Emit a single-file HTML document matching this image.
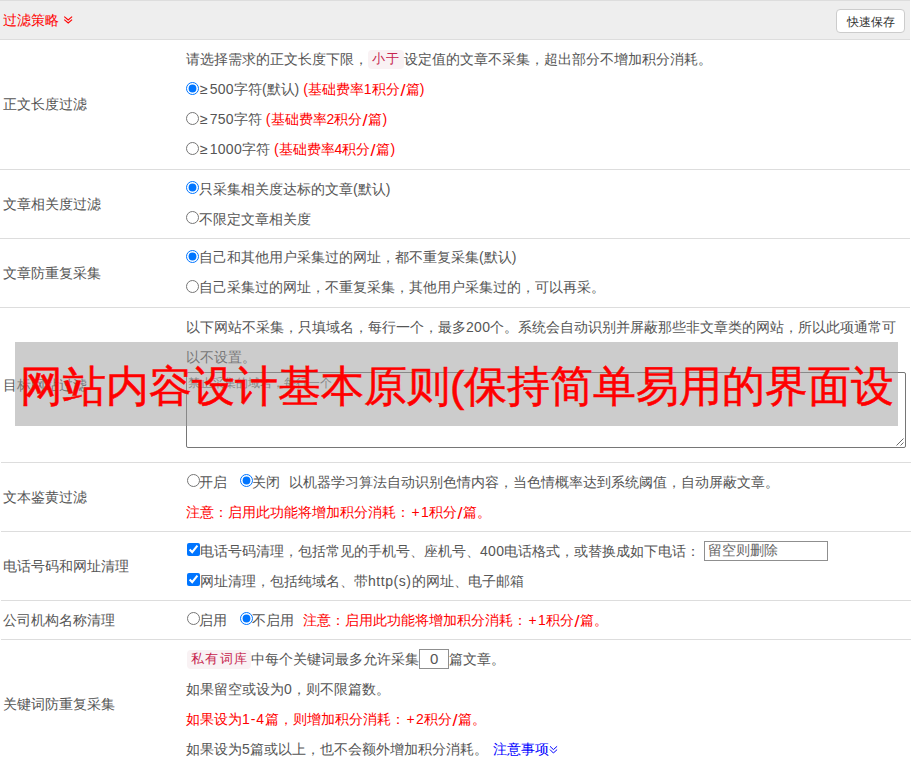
<!DOCTYPE html>
<html><head><meta charset="utf-8">
<style>
*{box-sizing:border-box}
html,body{margin:0;padding:0;background:#fff}
body{width:912px;height:768px;overflow:hidden;position:relative;font-family:"Liberation Sans",sans-serif;font-size:14px;color:#555}
.hd{position:absolute;left:0;top:0;width:910px;height:40px;background:#eee;border-top:1px solid #ddd;border-bottom:1px solid #ddd}
.hd .t{position:absolute;left:3px;top:0;line-height:38px;color:#f00;font-size:14px}
.btn{position:absolute;left:836px;top:8px;width:69px;height:24px;border:1px solid #ccc;border-radius:4px;background:#fff;color:#333;font-size:12px;line-height:25px;text-align:center}
.hr{position:absolute;left:0;width:910px;height:1px;background:#ddd}
.lb{position:absolute;left:3px;line-height:30px;height:30px;white-space:nowrap}
.ln{position:absolute;left:186px;line-height:30px;height:30px;white-space:nowrap}
.r{color:#f00}
.code{display:inline-block;background:#f9f2f4;color:#c7254e;border-radius:4px;padding:0 2.6px 0 4px;font-size:12.6px;letter-spacing:1.4px;height:19px;line-height:19px;vertical-align:top;margin-top:6px}
.rd{position:relative;display:inline-block;width:13px;height:13px;vertical-align:-1px}
.rd input{margin:0;position:absolute;left:0;top:0;width:13px;height:13px}
.ta{position:absolute;left:186px;top:372px;width:720px;height:76px;border:1px solid #767676;border-radius:2px;background:#fff}
.banner{position:absolute;left:15px;top:342px;width:883px;height:84px;background:rgba(153,153,153,.5);color:#f00;font-size:43.15px;line-height:88px;white-space:nowrap;overflow:hidden;padding-left:5px;font-weight:500;-webkit-text-stroke:.5px #f00}
.ge{margin:0 2px 0 1px}.n{letter-spacing:.3px}.sl{display:inline-block;margin:0 1.1px;transform:translateY(.8px) scale(1.3,1.17)}.pl{margin:0 1.3px 0 1.4px}.sp{display:inline-block;height:1px}.u input{top:-1px}.ru input{left:1px;top:-1px}
.inp{display:inline-block;vertical-align:top;border:1px solid #8f8f8f;background:#fff}
</style></head><body>
<div class="hd"><span class="t">过滤策略</span><svg width="10" height="10" viewBox="0 0 10 10" style="position:absolute;left:63px;top:14px"><path d="M1.25 1.6 L5.2 5 L9.1 1.6 M1.25 4.6 L5.2 8 L9.1 4.6" fill="none" stroke="#f00" stroke-width="1.1"/></svg><div class="btn">快速保存</div></div>

<div class="hr" style="top:169px"></div>
<div class="hr" style="top:238px"></div>
<div class="hr" style="top:307px"></div>
<div class="hr" style="top:462px;left:1px"></div>
<div class="hr" style="top:531px;left:1px"></div>
<div class="hr" style="top:600px;left:1px"></div>
<div class="hr" style="top:639px;left:1px"></div>

<!-- labels -->
<div class="lb" style="top:89px">正文长度过滤</div>
<div class="lb" style="top:189px">文章相关度过滤</div>
<div class="lb" style="top:258px">文章防重复采集</div>
<div class="lb" style="top:370px">目标网站过滤</div>
<div class="lb" style="top:482px">文本鉴黄过滤</div>
<div class="lb" style="top:551px">电话号码和网址清理</div>
<div class="lb" style="top:605px">公司机构名称清理</div>
<div class="lb" style="top:689px">关键词防重复采集</div>

<!-- row1 -->
<div class="ln" style="top:44px">请选择需求的正文长度下限，<span class="code" style="padding-right:3.6px">小于</span>设定值的文章不采集，超出部分不增加积分消耗。</div>
<div class="ln" style="top:74px"><span class="rd"><input type="radio" checked></span><span class="ge">≥</span><span class="n">500</span>字符(默认) <span class="r">(基础费率1积分<span class="sl">/</span>篇)</span></div>
<div class="ln" style="top:104px"><span class="rd"><input type="radio"></span><span class="ge">≥</span><span class="n">750</span>字符 <span class="r">(基础费率2积分<span class="sl">/</span>篇)</span></div>
<div class="ln" style="top:134px"><span class="rd"><input type="radio"></span><span class="ge">≥</span><span class="n">1000</span>字符 <span class="r">(基础费率4积分<span class="sl">/</span>篇)</span></div>
<!-- row2 -->
<div class="ln" style="top:174px"><span class="rd u"><input type="radio" checked></span>只采集相关度达标的文章(默认)</div>
<div class="ln" style="top:204px"><span class="rd u"><input type="radio"></span>不限定文章相关度</div>
<!-- row3 -->
<div class="ln" style="top:242px"><span class="rd"><input type="radio" checked></span>自己和其他用户采集过的网址，都不重复采集(默认)</div>
<div class="ln" style="top:272px"><span class="rd"><input type="radio"></span>自己采集过的网址，不重复采集，其他用户采集过的，可以再采。</div>
<!-- row4 -->
<div class="ln" style="top:312px">以下网站不采集，只填域名，每行一个，最多<span class="n">200</span>个。系统会自动识别并屏蔽那些非文章类的网站，所以此项通常可</div>
<div class="ln" style="top:342px">以不设置。</div>
<div class="ta"><div style="position:absolute;left:1px;top:2px;line-height:16px;font-size:12px;color:#757575">禁止采集的域名，每行一个</div></div>
<svg width="20" height="20" style="position:absolute;left:890px;top:430px"><path d="M6.5 15.5 L13.5 8.5 M10.5 15.5 L13.5 12.5" stroke="#6a6a6a" stroke-width="1" fill="none"/></svg>
<!-- row5 -->
<div class="ln" style="top:467px"><span class="rd ru"><input type="radio"></span>开启<span class="sp" style="width:12px"></span><span class="rd ru"><input type="radio" checked></span>关闭<span class="sp" style="width:9px"></span>以机器学习算法自动识别色情内容，当色情概率达到系统阈值，自动屏蔽文章。</div>
<div class="ln r" style="top:497px">注意：启用此功能将增加积分消耗：<span class="pl">+</span>1积分<span class="sl">/</span>篇。</div>
<!-- row6 -->
<div class="ln" style="top:536px"><span class="rd" style="margin-left:1px;vertical-align:0"><input type="checkbox" checked></span>电话号码清理，包括常见的手机号、座机号、<span class="n">400</span>电话格式，或替换成如下电话： <span class="inp" style="width:124px;height:20px;line-height:17px;padding-left:3px;color:#666;font-size:14px;margin-top:5px;margin-left:0">留空则删除</span></div>
<div class="ln" style="top:566px"><span class="rd" style="margin-left:1px;vertical-align:0"><input type="checkbox" checked></span>网址清理，包括纯域名、带<span style="letter-spacing:.55px">http(s)</span>的网址、电子邮箱</div>
<!-- row7 -->
<div class="ln" style="top:605px"><span class="rd ru"><input type="radio"></span>启用<span class="sp" style="width:12px"></span><span class="rd ru"><input type="radio" checked></span>不启用<span class="sp" style="width:9px"></span><span class="r">注意：启用此功能将增加积分消耗：<span class="pl">+</span>1积分<span class="sl">/</span>篇。</span></div>
<!-- row8 -->
<div class="ln" style="top:644px"><span class="code" style="margin-left:1px">私有词库</span>中每个关键词最多允许采集<span class="inp" style="width:30px;height:20px;line-height:18px;text-align:center;margin-top:5px;font-size:15px">0</span>篇文章。</div>
<div class="ln" style="top:674px">如果留空或设为0，则不限篇数。</div>
<div class="ln r" style="top:704px">如果设为<span class="n" style="letter-spacing:.95px">1-4</span>篇，则增加积分消耗：<span class="pl">+</span>2积分<span class="sl">/</span>篇。</div>
<div class="ln" style="top:734px">如果设为5篇或以上，也不会额外增加积分消耗。 <span style="color:#00f;margin-left:1px">注意事项</span></div>
<svg width="10" height="10" viewBox="0 0 10 10" style="position:absolute;left:549px;top:745px"><path d="M1 1.3 L4.4 4.6 L8.1 1.3 M1 4.6 L4.4 8 L8.1 4.6" fill="none" stroke="#00f" stroke-width="1"/></svg><div></div>

<div class="banner">网站内容设计基本原则(保持简单易用的界面设</div>
</body></html>
